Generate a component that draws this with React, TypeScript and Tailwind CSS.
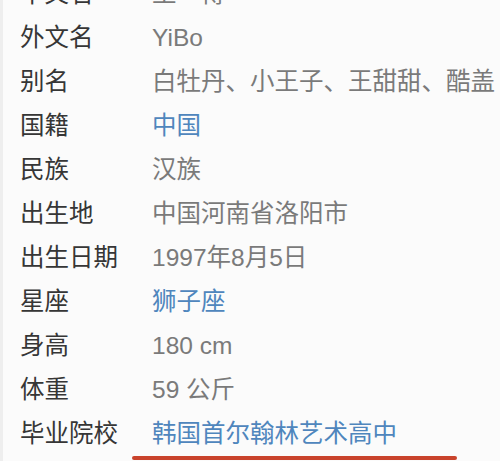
const rows: { label: string; value: string; link?: boolean }[] = [
  { label: "中文名", value: "王一博" },
  { label: "外文名", value: "YiBo" },
  { label: "别名", value: "白牡丹、小王子、王甜甜、酷盖" },
  { label: "国籍", value: "中国", link: true },
  { label: "民族", value: "汉族" },
  { label: "出生地", value: "中国河南省洛阳市" },
  { label: "出生日期", value: "1997年8月5日" },
  { label: "星座", value: "狮子座", link: true },
  { label: "身高", value: "180 cm" },
  { label: "体重", value: "59 公斤" },
  { label: "毕业院校", value: "韩国首尔翰林艺术高中", link: true },
];

export default function App() {
  return (
    <div
      className="relative h-[461px] w-[500px] overflow-hidden border-l-[3px] border-[#eeeeee] bg-[#fbfbfb]"
      style={{ fontFamily: '"Liberation Sans", "Noto Sans CJK SC", sans-serif' }}
    >
      <div className="-mt-[28px] flex flex-col">
        {rows.map((r) => (
          <div key={r.label} className="flex h-[44px] items-center text-[24.5px] leading-none">
            <span className="w-[149px] shrink-0 pl-[17px] text-[#363636]">{r.label}</span>
            <span
              className={
                "whitespace-nowrap " + (r.link ? "text-[#4f86bd]" : "text-[#7a7a7a]")
              }
            >
              {r.value}
            </span>
          </div>
        ))}
      </div>
      <div className="absolute left-[129px] top-[456px] h-[4px] w-[325px] rounded-sm bg-[#c9432c]" />
    </div>
  );
}
